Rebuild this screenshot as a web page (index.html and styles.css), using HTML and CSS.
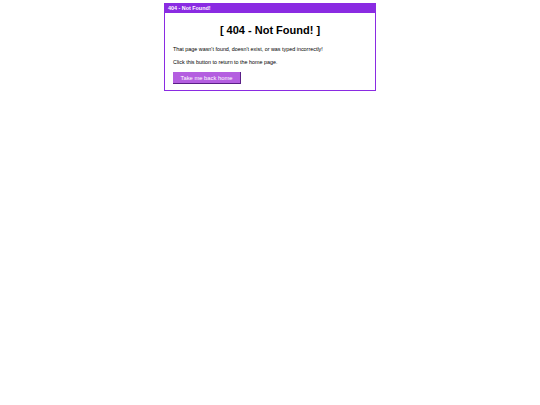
FILE: index.html
```html
<!DOCTYPE html>
<html>
<head>
<meta charset="utf-8">
<title>404 - Not Found!</title>
<link rel="stylesheet" href="styles.css">
</head>
<body>
<div class="window">
  <div class="titlebar">404 - Not Found!</div>
  <div class="content">
    <h1 class="heading">[ 404 - Not Found! ]</h1>
    <p class="text">That page wasn't found, doesn't exist, or was typed incorrectly!</p>
    <p class="text">Click this button to return to the home page.</p>
    <button class="btn">Take me back home</button>
  </div>
</div>
</body>
</html>
```
FILE: styles.css
```css
html, body {
  margin: 0;
  padding: 0;
  background: #ffffff;
}
body {
  font-family: "Liberation Sans", Arial, sans-serif;
  color: #000;
  padding-top: 3px;
}
.window {
  width: 210px;
  margin: 0 auto;
  border: 1px solid #8a2be2;
  background: #fff;
}
.titlebar {
  background: #8a2be2;
  color: #fff;
  font-weight: bold;
  font-size: 5.4px;
  line-height: 9px;
  height: 9px;
  padding-left: 3px;
}
.content {
  padding: 9px 8px 6px 8px;
}
.heading {
  margin: 0 0 8px 0;
  text-align: center;
  font-size: 11px;
  line-height: 16px;
  font-weight: bold;
}
.text {
  margin: 0 0 6px 0;
  font-size: 5.4px;
  line-height: 7px;
}
.btn {
  display: block;
  margin-top: 4px;
  width: 68px;
  height: 12px;
  padding: 0;
  background: #b45ee0;
  color: #fff;
  font-family: "Liberation Sans", Arial, sans-serif;
  font-size: 5.8px;
  border: none;
  border-right: 1px solid #5a1f87;
  border-bottom: 1px solid #5a1f87;
}
```
